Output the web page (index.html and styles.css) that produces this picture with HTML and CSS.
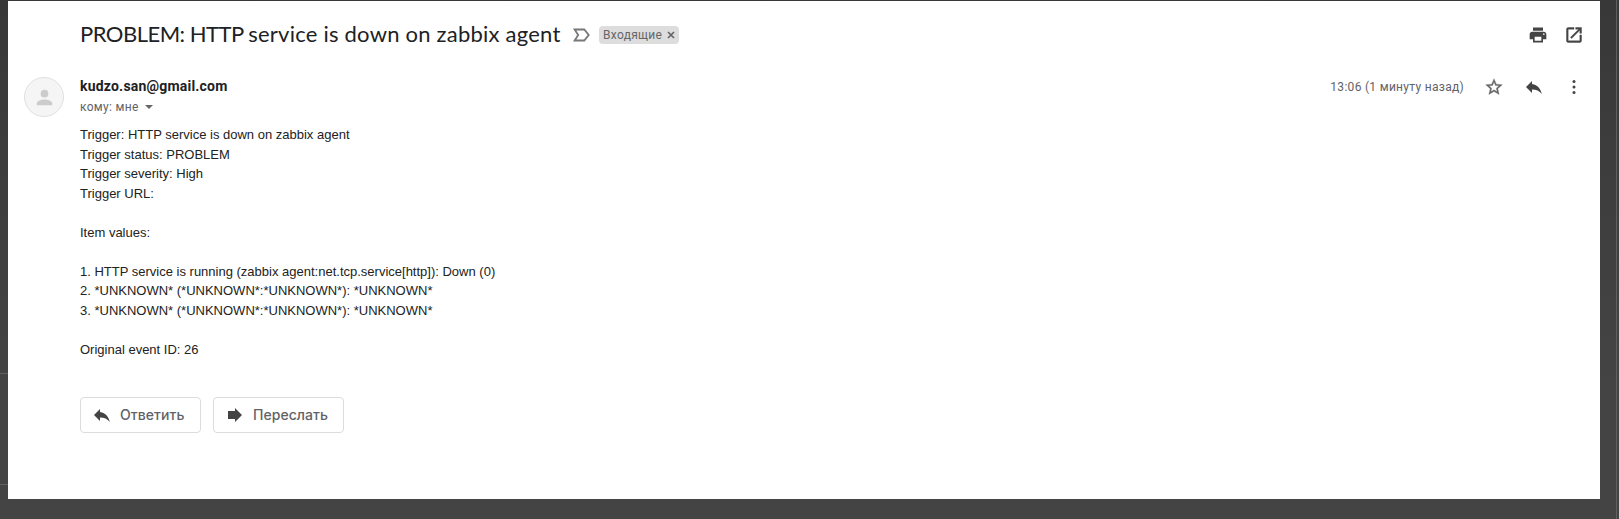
FILE: index.html
```html
<!DOCTYPE html>
<html lang="ru">
<head>
<meta charset="utf-8">
<title>PROBLEM: HTTP service is down on zabbix agent</title>
<link rel="stylesheet" href="styles.css">
</head>
<body>
<aside class="edge"></aside>
<main class="card">
  <header class="subject">
    <h1 class="title"><span class="caps">PROBLEM: HTTP </span>service is down on zabbix agent</h1>
    <svg class="marker" width="20" height="20" viewBox="0 0 20 20"><path d="M2.600 4.500h9.700l4.400 5.500-4.400 5.500H2.600L6.200 10z" fill="none" stroke="#777" stroke-width="1.800"/></svg>
    <span class="chip"><span class="chip-label">Входящие</span><svg width="8" height="8" viewBox="0 0 8 8"><path d="M1 1l6 6M7 1L1 7" stroke="#666" stroke-width="1.700"/></svg></span>
    <div class="tools">
      <svg width="20" height="20" viewBox="0 0 24 24" fill="#444"><path d="M19 8H5c-1.660 0-3 1.340-3 3v6h4v4h12v-4h4v-6c0-1.660-1.340-3-3-3zm-3 11H8v-5h8v5zm3-7c-.55 0-1-.45-1-1s.45-1 1-1 1 .45 1 1-.45 1-1 1zm-1-9H6v4h12V3z"/></svg>
      <svg width="20" height="20" viewBox="0 0 24 24" fill="#444" stroke="#444" stroke-width=".5"><path d="M19 19H5V5h7V3H5c-1.110 0-2 .9-2 2v14c0 1.100.89 2 2 2h14c1.100 0 2-.9 2-2v-7h-2v7zM14 3v2h3.590l-9.830 9.830 1.410 1.410L19 6.410V10h2V3h-7z"/></svg>
    </div>
  </header>
  <section class="message">
    <div class="avatar"><svg width="24" height="24" viewBox="0 0 24 24" fill="#ccc"><circle cx="12" cy="8" r="4"/><path d="M4 20v-2c0-2.700 5.300-4 8-4s8 1.300 8 4v2z"/></svg></div>
    <div class="content">
      <div class="meta">
        <div class="from">
          <div class="sender">kudzo.san@gmail.com</div>
          <div class="to"><span>кому: мне</span><svg width="8" height="4" viewBox="0 0 8 4"><path d="M0 0h8L4 4z" fill="#666"/></svg></div>
        </div>
        <div class="actions">
          <span class="time">13:06 (1 минуту назад)</span>
          <svg width="20" height="20" viewBox="0 0 24 24" fill="#666" stroke="#666" stroke-width=".4"><path d="M22 9.240l-7.190-.62L12 2 9.190 8.630 2 9.240l5.460 4.730L5.820 21 12 17.270 18.180 21l-1.630-7.030L22 9.240zM12 15.400l-3.760 2.270 1-4.280-3.320-2.880 4.380-.38L12 6.100l1.710 4.040 4.380.38-3.320 2.880 1 4.280L12 15.400z"/></svg>
          <svg width="20" height="20" viewBox="0 0 20 20" fill="#444"><path d="M8 7V4L2 10l6 6v-3.400c4.500 0 7.300 1.300 9.800 4.400C16.800 12 13.800 7.900 8 7z"/></svg>
          <svg width="20" height="20" viewBox="0 0 20 20" fill="#444"><circle cx="10" cy="4.500" r="1.500"/><circle cx="10" cy="10" r="1.500"/><circle cx="10" cy="15.500" r="1.500"/></svg>
        </div>
      </div>
      <div class="body">Trigger: HTTP service is down on zabbix agent
Trigger status: PROBLEM
Trigger severity: High
Trigger URL:

Item values:

1. HTTP service is running (zabbix agent:net.tcp.service[http]): Down (0)
2. *UNKNOWN* (*UNKNOWN*:*UNKNOWN*): *UNKNOWN*
3. *UNKNOWN* (*UNKNOWN*:*UNKNOWN*): *UNKNOWN*

Original event ID: 26</div>
      <div class="buttons">
        <button class="btn btn-reply"><svg width="20" height="20" viewBox="0 0 20 20" fill="#444"><path d="M8 7V4L2 10l6 6v-3.400c4.500 0 7.300 1.300 9.800 4.400C16.800 12 13.800 7.900 8 7z"/></svg><span class="btn-label">Ответить</span></button>
        <button class="btn btn-forward"><svg width="20" height="20" viewBox="0 0 20 20" fill="#444"><path d="M3 6h7V3l7 7-7 7v-3H3z"/></svg><span class="btn-label">Переслать</span></button>
      </div>
    </div>
  </section>
</main>
<aside class="rail"></aside>
</body>
</html>
```
FILE: styles.css
```css
* { box-sizing: border-box; }
body {
  margin: 0;
  width: 1619px;
  height: 519px;
  padding-top: 1px;
  display: grid;
  grid-template-columns: 8px 1592px 19px;
  grid-template-rows: 498px;
  background: linear-gradient(#383838, #444 75%);
  font-family: Roboto, "Noto Sans", sans-serif;
  overflow: hidden;
}
svg { display: block; flex: none; }
.edge {
  background:
    linear-gradient(#606060, #606060) 0 372px / 8px 1px no-repeat,
    linear-gradient(#606060, #606060) 0 483px / 8px 1px no-repeat;
}
.rail { margin: -1px 2px -20px 0; border-right: 1px solid #606060; }
.card { background: #fff; padding: 0 16px; }
.subject { display: flex; align-items: center; height: 68px; padding-left: 56px; }
.title {
  margin: 0;
  width: 481px;
  padding-bottom: 2px;
  font: 400 22px/28px Lato, sans-serif;
  letter-spacing: .23px;
  color: #202124;
  white-space: nowrap;
}
.caps { letter-spacing: -.5px; }
.marker { margin-left: 11px; }
.chip {
  display: flex;
  align-items: center;
  justify-content: space-between;
  width: 80px;
  height: 18px;
  margin-left: 7px;
  padding: 0 4px;
  border-radius: 4px;
  background: #ddd;
  color: #666;
  font-size: 12px;
  letter-spacing: .3px;
}
.tools { display: flex; gap: 16px; margin-left: auto; }
.message { display: flex; gap: 16px; padding-top: 8px; }
.avatar {
  display: grid;
  place-items: center;
  width: 40px;
  height: 40px;
  border: 1px solid #e0e0e0;
  border-radius: 50%;
  background: #f5f5f5;
}
.avatar svg { width: 23px; height: 23px; }
.content { flex: 1; }
.meta { display: flex; justify-content: space-between; height: 48px; }
.sender { height: 20px; font-size: 14px; font-weight: 700; line-height: 18px; letter-spacing: .2px; color: #202124; }
.to { display: flex; align-items: center; gap: 6px; height: 20px; font-size: 12px; letter-spacing: .3px; color: #5f6368; }
.actions { display: flex; align-items: center; gap: 20px; height: 20px; }
.time { font-size: 12px; letter-spacing: .3px; color: #5f6368; white-space: nowrap; }
.body { font: 13px/19.5px "Liberation Sans", Arial, sans-serif; color: #222; white-space: pre; }
.buttons { display: flex; gap: 12px; margin-top: 38px; }
.btn {
  display: flex;
  align-items: center;
  gap: 8px;
  height: 36px;
  padding: 0 0 0 11px;
  border: 1px solid #dadce0;
  border-radius: 4px;
  background: #fff;
  color: #5f6368;
  font: 500 14px Inter, sans-serif;
}
.btn-label { padding-bottom: 2px; letter-spacing: .05px; }
.btn-reply { width: 121px; }
.btn-forward { width: 131px; }
```
